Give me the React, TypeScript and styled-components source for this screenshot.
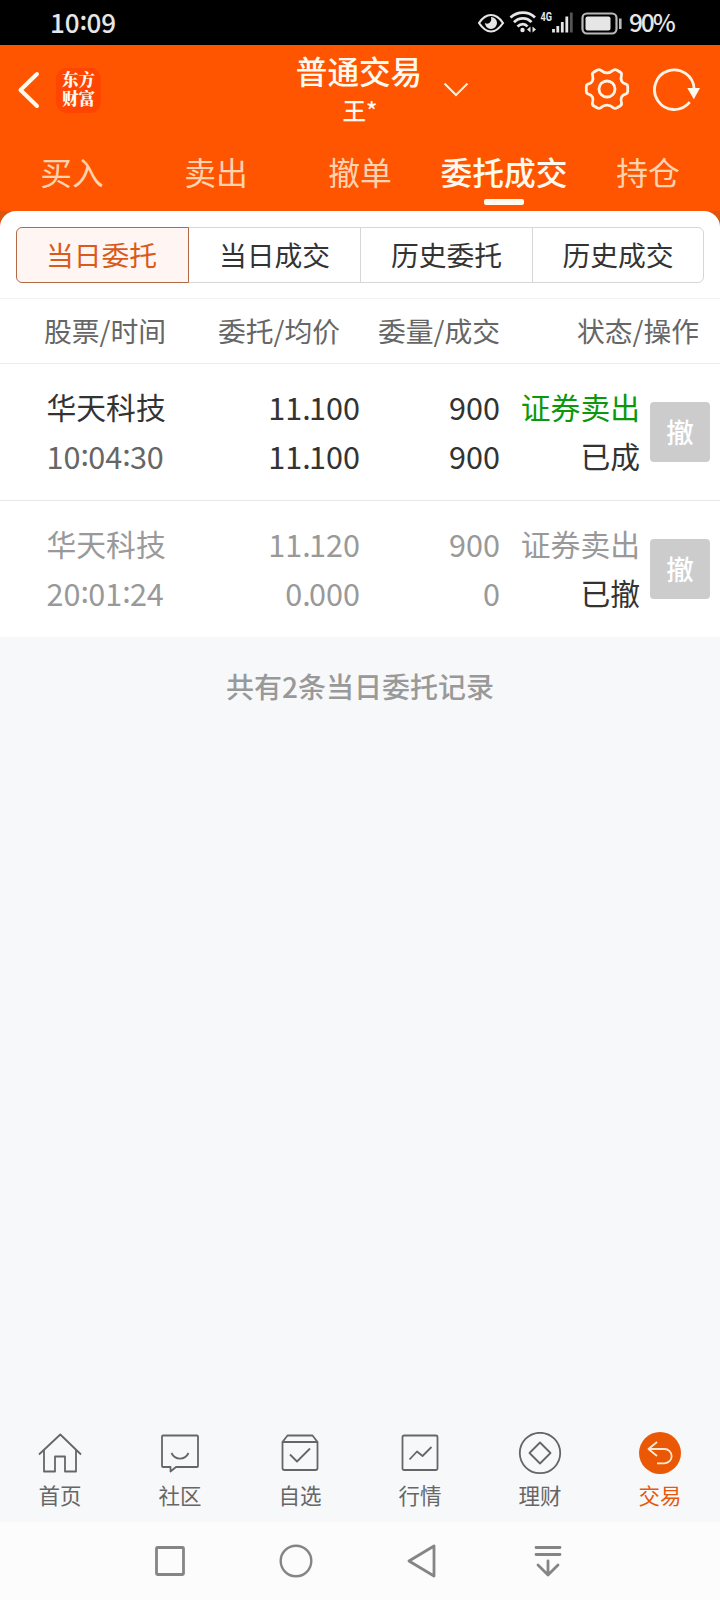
import React from 'react';
import styled, { createGlobalStyle } from 'styled-components';

const Global = createGlobalStyle`
  * { box-sizing: border-box; }
  body { margin: 0; background: #f7f8fa; font-family: "Noto Sans CJK SC", sans-serif; }
  button { font: inherit; border: 0; background: none; padding: 0; margin: 0; }
`;

const Screen = styled.div`
  width: 720px;
  height: 1600px;
  display: flex;
  flex-direction: column;
  overflow: hidden;
  background: #f7f8fa;
`;

const StatusBar = styled.div`
  flex: none;
  height: 45px;
  padding: 0 44px 0 50px;
  display: flex;
  align-items: center;
  justify-content: space-between;
  background: #000;
  color: #e6e6e6;
`;

const Clock = styled.span`
  font-size: 26px;
  font-weight: 500;
  line-height: 43px;
  padding-bottom: 2px;
  letter-spacing: -0.1px;
`;

const StatusIcons = styled.div`
  display: flex;
  align-items: center;
`;

const BatteryText = styled.span`
  width: 47px;
  margin-left: 5px;
  font-size: 24.5px;
  font-weight: 500;
  line-height: 43px;
  padding-bottom: 2px;
  letter-spacing: -2.1px;
  white-space: nowrap;
`;

const Header = styled.header`
  flex: none;
  height: 166px;
  background: #ff5500;
  color: #fffaf0;
`;

const TitleBar = styled.div`
  height: 90px;
  display: grid;
  grid-template-columns: 291px 136px 1fr;
`;

const TitleLeft = styled.div`
  display: flex;
  align-items: center;
  padding-left: 17px;
`;

const Logo = styled.div`
  width: 45px;
  height: 45px;
  margin-left: 16px;
  border-radius: 11px;
  background: #ff4500;
  padding: 2px 4px 0 6px;
  font-family: "Noto Serif CJK SC", "Noto Sans CJK SC", sans-serif;
  font-size: 16.5px;
  font-weight: 900;
  line-height: 19.5px;
`;

const TitleBlock = styled.div`
  display: flex;
  flex-direction: column;
  align-items: center;
  white-space: nowrap;
`;

const Title = styled.div`
  margin-top: 3px;
  margin-bottom: 1px;
  font-size: 31.6px;
  line-height: 44px;
  font-weight: 500;
`;

const Account = styled.div`
  margin-left: 2px;
  padding-top: 1px;
  font-size: 23.5px;
  line-height: 32px;
  font-weight: 500;
`;

const TitleRight = styled.div`
  display: flex;
  align-items: center;
  padding-left: 16px;
`;

const Tabs = styled.nav`
  height: 76px;
  display: grid;
  grid-template-columns: repeat(5, 144px);
`;

const Tab = styled.button<{ $active?: boolean }>`
  display: flex;
  flex-direction: column;
  align-items: center;
  padding-top: 14px;
  font-size: 31.8px;
  line-height: 44px;
  font-weight: ${p => (p.$active ? 500 : 400)};
  color: ${p => (p.$active ? '#fffaf0' : '#ffd2b0')};
  white-space: nowrap;
  &::after {
    content: '';
    width: 40px;
    height: 6px;
    margin-top: 6px;
    border-radius: 2px;
    background: ${p => (p.$active ? '#fffaf0' : 'transparent')};
  }
`;

const SheetBacking = styled.div`
  flex: none;
  background: linear-gradient(#dc5410 0 20px, #fff 20px);
`;

const Sheet = styled.main`
  border-radius: 16px 16px 0 0;
  background: #fff;
  overflow: hidden;
`;

const Segments = styled.div`
  display: grid;
  grid-template-columns: repeat(4, 172px);
  padding: 16px 16px 15px;
`;

const Segment = styled.button<{ $active?: boolean }>`
  height: 56px;
  margin-right: -1px;
  border: 1px solid ${p => (p.$active ? '#b26a45' : '#d4d6d8')};
  background: ${p => (p.$active ? '#fff5f2' : '#fff')};
  color: ${p => (p.$active ? '#d95a1a' : '#333')};
  position: relative;
  z-index: ${p => (p.$active ? 1 : 0)};
  font-size: 27.8px;
  line-height: 52px;
  padding-bottom: 2px;
  white-space: nowrap;
  &:first-child { border-radius: 6px 0 0 6px; padding-right: 2px; }
  &:last-child { margin-right: 0; border-radius: 0 6px 6px 0; }
`;

const TableHead = styled.div`
  height: 66px;
  border-top: 1px solid #f2f2f2;
  border-bottom: 1px solid #ececec;
  display: grid;
  grid-template-columns: 166px 174px 160px 199px;
  text-align: right;
  font-size: 27.8px;
  line-height: 62px;
  color: #666;
  white-space: nowrap;
`;

const OrderRow = styled.div<{ $dim?: boolean }>`
  height: ${p => (p.$dim ? 136 : 137)}px;
  border-bottom: ${p => (p.$dim ? 0 : 1)}px solid #e8e8e8;
  display: grid;
  grid-template-columns: 173px 187px 140px 140px 70px;
  align-items: start;
  padding-top: 18px;
  color: ${p => (p.$dim ? '#999' : '#333')};
`;

const Cell = styled.div<{ $start?: boolean }>`
  display: flex;
  flex-direction: column;
  align-items: ${p => (p.$start ? 'flex-start' : 'flex-end')};
  padding-left: ${p => (p.$start ? 46.5 : 0)}px;
`;

const Line = styled.span<{ $color?: string; $num?: boolean }>`
  font-size: ${p => (p.$num ? 30.6 : 29.8)}px;
  height: 49px;
  line-height: ${p => (p.$num ? 51 : 49)}px;
  color: ${p => p.$color || 'inherit'};
  white-space: nowrap;
`;

const Colon = styled.span`
  display: inline-block;
  line-height: 1;
  letter-spacing: -0.8px;
  transform: translateY(-3px);
`;

const Point = styled.span`
  letter-spacing: -1.8px;
`;

const Figures = ({ value }: { value: string }) => (
  <>
    {value.split(/([:.])/).map((part, i) =>
      part === ':' ? <Colon key={i}>:</Colon> : part === '.' ? <Point key={i}>.</Point> : part,
    )}
  </>
);

const CancelButton = styled.button`
  width: 60px;
  height: 60px;
  margin: 20px 0 0 10px;
  padding-bottom: 2px;
  border-radius: 4px;
  background: #ccc;
  color: #fff;
  font-size: 27.5px;
  line-height: 58px;
  font-weight: 500;
`;

const Summary = styled.p`
  flex: 1;
  margin: 0;
  padding-top: 29px;
  text-align: center;
  font-size: 28px;
  line-height: 40px;
  font-weight: 500;
  color: #999;
`;

const BottomNav = styled.nav`
  flex: none;
  height: 104px;
  display: grid;
  grid-template-columns: repeat(6, 120px);
`;

const NavItem = styled.button<{ $active?: boolean }>`
  display: flex;
  flex-direction: column;
  align-items: center;
  padding-top: 14px;
  font-size: 21.5px;
  line-height: 30px;
  color: ${p => (p.$active ? '#e8580c' : '#666')};
  svg { display: block; margin-bottom: 4px; }
`;

const SystemNav = styled.div`
  flex: none;
  height: 78px;
  padding: 0 109px 0 107px;
  display: grid;
  grid-template-columns: repeat(4, 126px);
  align-items: center;
  justify-items: center;
  background: #fcfcfc;
`;

const BackIcon = () => (
  <svg width="23" height="38" viewBox="0 0 23 38" fill="none" stroke="#fffaf0" strokeWidth="4" strokeLinecap="round" strokeLinejoin="round">
    <path d="M20 3L3.500 19L20 35" />
  </svg>
);

const ChevronDown = () => (
  <svg width="26" height="16" viewBox="0 0 26 16" fill="none" stroke="#fff0dc" strokeWidth="2">
    <path d="M1.500 1.500L13 13L24.500 1.500" />
  </svg>
);

const HeaderActions = styled.div`
  display: flex;
  gap: 22px;
  margin-left: 115px;
`;

const GearIcon = () => (
  <svg width="46" height="46" viewBox="0 0 46 46" fill="none" stroke="#fff4e4" strokeWidth="2.800" strokeLinejoin="round">
    <path d="M16.500 3.200Q23 8.500 29.500 3.200Q31 2.200 33 3.200L36 5Q38 6.200 37.500 8Q35.500 15.500 42 17.200Q43.700 17.700 43.700 19.500V24.500Q43.700 26.300 42 26.800Q35.500 28.500 37.500 36Q38 37.800 36 39L33 40.800Q31 41.800 29.500 40.800Q23 35.500 16.500 40.800Q15 41.800 13 40.800L10 39Q8 37.800 8.500 36Q10.500 28.500 4 26.800Q2.300 26.300 2.300 24.500V19.500Q2.300 17.700 4 17.200Q10.500 15.500 8.500 8Q8 6.200 10 5L13 3.200Q15 2.200 16.500 3.200Z" />
    <circle cx="23" cy="22" r="8" />
  </svg>
);

const RefreshIcon = () => (
  <svg width="50" height="46" viewBox="0 0 50 46" fill="none" stroke="#fff4e4" strokeWidth="2.800">
    <path d="M37.700 35.200A19.800 19.800 0 1 1 42.100 22" />
    <path d="M35.300 21H48L41.800 32.300Z" fill="#fffaf0" stroke="none" />
  </svg>
);

const StatusGlyphs = () => (
  <svg width="146" height="45" viewBox="0 0 146 45" fill="none" stroke="#e6e6e6">
    <path d="M1 23C5 17 9 15 13 15S21 17 25 23C21 29 17 31.500 13 31.500S5 29 1 23Z" strokeWidth="2.200" />
    <path d="M13 17A6 6 0 1 1 7 23Q10 24.500 12 22.500Q14 20 13 17Z" fill="#e6e6e6" stroke="none" />
    <g strokeWidth="2.800">
      <path d="M32.500 17.500C39.500 11 50.500 11 57 17.500" />
      <path d="M36 22.200C41 17 49 17 53.500 22.200" />
      <path d="M39.500 26.500C43 23.200 47 23.200 49.500 26.500" />
    </g>
    <circle cx="44.500" cy="30" r="2.200" fill="#e6e6e6" stroke="none" />
    <path d="M49 29.500L52.500 26.500V32.500ZM58 29.500L54.500 26.500V32.500Z" fill="#e6e6e6" stroke="none" />
    <text x="62.500" y="21" fontFamily="Roboto, sans-serif" fontSize="12.500" fontWeight="700" textLength="11.500" lengthAdjust="spacingAndGlyphs" fill="#e6e6e6" stroke="none">4G</text>
    <g strokeWidth="2.800">
      <path d="M75.500 29V32.500M79.800 26V32.500M84.300 22V32.500M88.800 16.500V32.500" />
      <path d="M93.300 12.500V32.500" stroke="#555" />
    </g>
    <rect x="104.500" y="13.500" width="34" height="20" rx="4.500" stroke="#b8b8b8" strokeWidth="2.200" />
    <rect x="107.500" y="16.500" width="25" height="14" rx="2" fill="#e6e6e6" stroke="none" />
    <path d="M142.300 18.500V29" stroke="#b8b8b8" strokeWidth="2.600" />
  </svg>
);

const iconProps = { width: 44, height: 44, viewBox: '0 0 44 44', fill: 'none', stroke: 'currentColor', strokeWidth: 1.8, strokeLinejoin: 'round' as const };

const HomeIcon = () => (
  <svg {...iconProps}><path d="M1 22.500L22.300 2.500L43 22.500M6 18V39.500H17V24.500H27V39.500H38V18" /></svg>
);
const CommunityIcon = () => (
  <svg {...iconProps}><path d="M5 3.500H39Q40 3.500 40 4.500V34Q40 35 39 35H18L12.500 39.500V35H5Q4 35 4 34V4.500Q4 3.500 5 3.500Z" /><path d="M13.500 21C17 28.500 27 28.500 30.500 21" /></svg>
);
const WatchlistIcon = () => (
  <svg {...iconProps}><path d="M4.500 10L9.500 3.500H34.500L39.500 10M4.500 10H39.500V36Q39.500 38 37.500 38H6.500Q4.500 38 4.500 36Z" /><path d="M12 22.500L19 29.500L32 16.500" /></svg>
);
const MarketIcon = () => (
  <svg {...iconProps}><rect x="4.500" y="3.500" width="35" height="34.500" rx="1.500" /><path d="M11.500 27.500L19 19.500L24.500 24L33.500 15" /></svg>
);
const WealthIcon = () => (
  <svg {...iconProps}><circle cx="22" cy="21" r="20.200" /><path d="M22 10.500L32.500 21L22 31.500L11.500 21Z" /></svg>
);
const TradeIcon = () => (
  <svg {...iconProps}><circle cx="22" cy="21" r="21" fill="#ea5806" stroke="none" /><path d="M19 10L10.500 17L19 24M11 17H26.500A7 7 0 0 1 26.500 31.300H19" stroke="#ffe9d2" /></svg>
);

const navItems = [
  { label: '首页', Icon: HomeIcon },
  { label: '社区', Icon: CommunityIcon },
  { label: '自选', Icon: WatchlistIcon },
  { label: '行情', Icon: MarketIcon },
  { label: '理财', Icon: WealthIcon },
  { label: '交易', Icon: TradeIcon, active: true },
];

const orders = [
  { name: '华天科技', time: '10:04:30', price: '11.100', avg: '11.100', qty: '900', filled: '900', side: '证券卖出', state: '已成', dim: false },
  { name: '华天科技', time: '20:01:24', price: '11.120', avg: '0.000', qty: '900', filled: '0', side: '证券卖出', state: '已撤', dim: true },
];

const sysIcon = { width: 40, height: 40, viewBox: '0 0 40 40', fill: 'none', stroke: '#858585', strokeWidth: 2.8, strokeLinejoin: 'round' as const, strokeLinecap: 'round' as const };

export default function App() {
  return (
    <Screen>
      <Global />
      <StatusBar>
        <Clock><Figures value="10:09" /></Clock>
        <StatusIcons>
          <StatusGlyphs />
          <BatteryText>90%</BatteryText>
        </StatusIcons>
      </StatusBar>
      <Header>
        <TitleBar>
          <TitleLeft>
            <BackIcon />
            <Logo>东方<br />财富</Logo>
          </TitleLeft>
          <TitleBlock>
            <Title>普通交易</Title>
            <Account>王*</Account>
          </TitleBlock>
          <TitleRight>
            <ChevronDown />
            <HeaderActions>
              <GearIcon />
              <RefreshIcon />
            </HeaderActions>
          </TitleRight>
        </TitleBar>
        <Tabs>
          {['买入', '卖出', '撤单', '委托成交', '持仓'].map(t => (
            <Tab key={t} $active={t === '委托成交'}>{t}</Tab>
          ))}
        </Tabs>
      </Header>
      <SheetBacking>
        <Sheet>
          <Segments>
            {['当日委托', '当日成交', '历史委托', '历史成交'].map((s, i) => (
              <Segment key={s} $active={i === 0}>{s}</Segment>
            ))}
          </Segments>
          <TableHead>
            <span>股票/时间</span>
            <span>委托/均价</span>
            <span>委量/成交</span>
            <span>状态/操作</span>
          </TableHead>
          {orders.map(o => (
            <OrderRow key={o.time} $dim={o.dim}>
              <Cell $start>
                <Line>{o.name}</Line>
                <Line $num $color={o.dim ? undefined : '#666'}><Figures value={o.time} /></Line>
              </Cell>
              <Cell>
                <Line $num><Figures value={o.price} /></Line>
                <Line $num><Figures value={o.avg} /></Line>
              </Cell>
              <Cell><Line $num>{o.qty}</Line><Line $num>{o.filled}</Line></Cell>
              <Cell>
                <Line $color={o.dim ? undefined : '#0b980b'}>{o.side}</Line>
                <Line $color="#333">{o.state}</Line>
              </Cell>
              <CancelButton>撤</CancelButton>
            </OrderRow>
          ))}
        </Sheet>
      </SheetBacking>
      <Summary>共有2条当日委托记录</Summary>
      <BottomNav>
        {navItems.map(({ label, Icon, active }) => (
          <NavItem key={label} $active={active}><Icon />{label}</NavItem>
        ))}
      </BottomNav>
      <SystemNav>
        <svg {...sysIcon}><rect x="6.500" y="6.500" width="27" height="27" rx="1" /></svg>
        <svg {...sysIcon} strokeWidth={2.4}><circle cx="20" cy="20" r="15.300" /></svg>
        <svg {...sysIcon}><path d="M32 5L7 20L32 35Z" /></svg>
        <svg {...sysIcon}><path d="M8 6.500H32M8 13.500H32M20 20V34M10 24L20 34L30 24" /></svg>
      </SystemNav>
    </Screen>
  );
}
